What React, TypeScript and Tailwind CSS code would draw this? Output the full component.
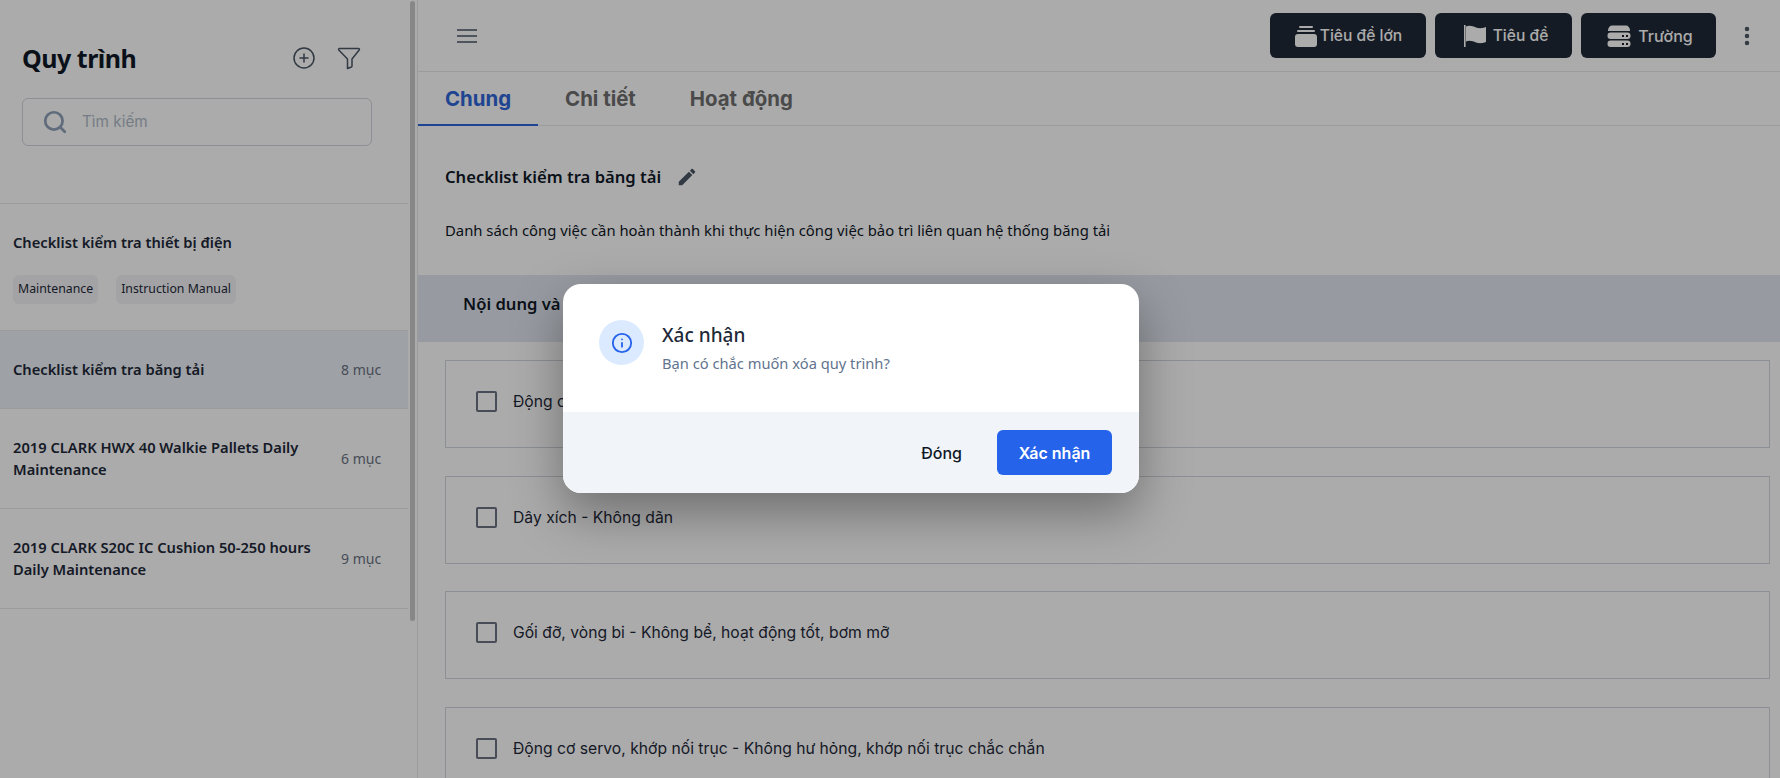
import { Info, PlusCircle, Search, MoreVertical } from 'lucide-react';

const sans = 'font-["Noto_Sans",sans-serif]';
const inter = 'font-["Inter",sans-serif]';

const checklist = [
  'Động cơ - Không rung, không ồn',
  'Dây xích - Không dãn',
  'Gối đỡ, vòng bi - Không bể, hoạt động tốt, bơm mỡ',
  'Động cơ servo, khớp nối trục - Không hư hỏng, khớp nối trục chắc chắn',
];

const rows = [
  { name: 'Checklist kiểm tra băng tải', count: '8 mục', active: true, h: 'h-[78px]' },
  { name: '2019 CLARK HWX 40 Walkie Pallets Daily Maintenance', count: '6 mục', active: false, h: 'h-[100px]' },
  { name: '2019 CLARK S20C IC Cushion 50-250 hours Daily Maintenance', count: '9 mục', active: false, h: 'h-[100px]' },
];

function StackIcon() {
  return (
    <svg width="24" height="24" viewBox="0 0 24 24" fill="currentColor">
      <rect x="1" y="10" width="22" height="13" rx="3" />
      <rect x="3" y="6" width="18" height="2" rx="1" />
      <rect x="5" y="2" width="14" height="2" rx="1" />
    </svg>
  );
}

function ServerIcon() {
  return (
    <svg width="24" height="24" viewBox="0 0 24 24" fill="currentColor">
      <path d="M5 1.5h14c2 0 4 2 4 5v.5H1v-.5c0-3 2-5 4-5z" />
      <rect x="0.5" y="8.5" width="23" height="6.5" rx="3" />
      <rect x="0.5" y="16.5" width="23" height="6.5" rx="3" />
      <rect x="15" y="11" width="2" height="2" fill="#151c28" />
      <rect x="19" y="11" width="2" height="2" fill="#151c28" />
      <rect x="15" y="19" width="2" height="2" fill="#151c28" />
      <rect x="19" y="19" width="2" height="2" fill="#151c28" />
    </svg>
  );
}

function FlagIcon() {
  return (
    <svg width="24" height="24" viewBox="0 0 24 24" fill="currentColor">
      <path d="M1 1h1.6v22H1z" />
      <path d="M3 2.5c4-1.5 7 0 10 1s6 1 10-.5v15c-4 1.5-7 1.5-10 .5s-6-2.5-10-1z" />
    </svg>
  );
}

function FunnelIcon() {
  return (
    <svg width="24" height="24" viewBox="0 0 24 24" fill="none" stroke="currentColor" strokeWidth="1.5" strokeLinejoin="round">
      <path d="M2.5 2.5h19c.8 0 1.2.9.7 1.5L15 13v7c0 .5-.3.8-.7 1l-3.8 1.5V13L1.8 4c-.5-.6-.1-1.5.7-1.5z" />
    </svg>
  );
}

function HamburgerIcon() {
  return (
    <svg width="20" height="14" viewBox="0 0 20 14" fill="none" stroke="currentColor" strokeWidth="1.6">
      <path d="M0 1h20M0 7h20M0 13h20" />
    </svg>
  );
}

function EditIcon() {
  return (
    <svg width="22" height="22" viewBox="0 0 24 24" fill="currentColor">
      <path d="M3 17.25V21h3.75L17.81 9.94l-3.75-3.75L3 17.25zM20.71 7.04c.39-.39.39-1.02 0-1.41l-2.34-2.34c-.39-.39-1.02-.39-1.41 0l-1.83 1.83 3.75 3.75 1.83-1.83z" />
    </svg>
  );
}

function Sidebar() {
  return (
    <aside className="w-[418px] h-full shrink-0 border-r border-gray-200 flex overflow-hidden">
      <div className="w-[408px] shrink-0">
        <div className="h-[204px] pl-[22px] pr-[36px] pt-[38px] border-b border-gray-200">
          <div className="flex items-center h-[40px]">
            <h1 className={`${sans} text-[25px] font-bold text-gray-900 tracking-[-0.5px] pt-[2px]`}>Quy trình</h1>
            <PlusCircle size={24} strokeWidth={1.5} className="ml-auto mr-[21px] text-gray-600" />
            <span className="mr-[11px] text-gray-600"><FunnelIcon /></span>
          </div>
          <div className="mt-[20px] h-[48px] w-[350px] border border-gray-300 rounded-md flex items-center pl-[19px]">
            <Search size={26} strokeWidth={2.5} className="text-slate-400" />
            <span className={`${inter} ml-[14px] text-[15.3px] text-[#b0bac7]`}>Tìm kiếm</span>
          </div>
        </div>
        <div className="h-[127px] pl-[13px] pt-[26px] border-b border-gray-200">
          <div className={`${sans} text-[14.7px] font-semibold text-gray-800 leading-[24px]`}>Checklist kiểm tra thiết bị điện</div>
          <div className="mt-[21px] flex gap-[18px]">
            <span className={`${sans} h-[29px] px-[5px] flex items-center rounded-md bg-gray-100 text-[12.3px] text-gray-800`}>Maintenance</span>
            <span className={`${sans} h-[29px] px-[5px] flex items-center rounded-md bg-gray-100 text-[12.3px] text-gray-800`}>Instruction Manual</span>
          </div>
        </div>
        {rows.map((r) => (
          <div key={r.name} className={`${r.h} ${r.active ? 'bg-[#ecf0f6]' : ''} pl-[13px] flex items-center border-b border-gray-200`}>
            <div className={`${sans} w-[320px] pb-[2px] text-[14.7px] font-semibold text-gray-800 leading-[22px]`}>{r.name}</div>
            <span className={`${sans} ml-[8px] text-sm text-gray-500`}>{r.count}</span>
          </div>
        ))}
      </div>
      <div className="w-[5px] ml-[2px] mt-px h-[620px] rounded-full bg-[#c9c9c9]" />
    </aside>
  );
}

function Main() {
  return (
    <main className="flex-1 min-w-0 h-full overflow-hidden">
      <header className="h-[72px] border-b border-gray-200 flex items-center pl-[39px]">
        <span className="text-gray-600"><HamburgerIcon /></span>
        <div className={`${inter} ml-auto flex items-center gap-[9px] text-[15.6px] font-medium text-white`}>
          <button className="w-[156px] h-[45px] rounded-md bg-[#1f2937] flex items-center justify-center gap-[2px]"><StackIcon />Tiêu đề lớn</button>
          <button className="w-[137px] h-[45px] rounded-md bg-[#1f2937] flex items-center justify-center gap-[6px] pl-[4px]"><FlagIcon />Tiêu đề</button>
          <button className="w-[135px] h-[45px] rounded-md bg-[#1f2937] flex items-center justify-center gap-[7px] pl-[3px] text-base"><ServerIcon />Trường</button>
        </div>
        <MoreVertical size={24} strokeWidth={2.5} className="ml-[19px] mr-[21px] text-gray-600" />
      </header>

      <nav className={`${inter} h-[54px] border-b border-gray-200 flex text-[20.4px] font-bold`}>
        <span className="px-[27px] h-[54px] pt-[3px] flex items-center border-b-2 border-[#2f66d8] text-[#2f66d8]">Chung</span>
        <span className="px-[27px] h-[53px] pt-[1px] flex items-center text-[#6f6f6f]">Chi tiết</span>
        <span className="px-[27px] h-[53px] pt-[1px] flex items-center text-[#6f6f6f]">Hoạt động</span>
      </nav>

      <div className="ml-[27px] mt-[39px] flex items-center gap-[15px] h-[24px]">
        <span className={`${sans} text-[16.6px] font-semibold text-gray-900`}>Checklist kiểm tra băng tải</span>
        <span className="text-gray-600"><EditIcon /></span>
      </div>
      <p className={`${sans} ml-[27px] mt-[29px] text-[14.85px] text-gray-900 leading-[24px]`}>
        Danh sách công việc cần hoàn thành khi thực hiện công việc bảo trì liên quan hệ thống băng tải
      </p>

      <div className="mt-[33px] h-[67px] bg-slate-200 flex items-center pl-[45px] pb-[8px]">
        <span className={`${sans} text-[16.6px] font-semibold text-gray-900`}>Nội dung và yêu cầu</span>
      </div>

      <div className="pl-[27px] pr-[10px] pt-[18px] flex flex-col gap-[27.6px]">
        {checklist.map((c) => (
          <div key={c} className="h-[88px] border border-gray-300 flex items-start pl-[30px] pt-[30px]">
            <span className="w-[21px] h-[21px] rounded-[2px] border-2 border-gray-500 shrink-0" />
            <span className={`${inter} ml-[16px] text-[15.7px] text-gray-800 leading-[21px]`}>{c}</span>
          </div>
        ))}
      </div>
    </main>
  );
}

export default function App() {
  return (
    <div className="relative w-[1780px] h-[778px] flex bg-white overflow-hidden">
      <Sidebar />
      <Main />
      <div className="absolute inset-0 bg-black/33">
        <div className="absolute left-[563px] top-[284px] w-[576px] h-[209px] rounded-[18px] overflow-hidden bg-white shadow-[0_20px_50px_rgba(0,0,0,0.35)]">
          <div className="h-[128px] flex pl-[36px] pt-[36px]">
            <div className="w-[45px] h-[45px] rounded-full bg-[#dbeafe] flex items-center justify-center">
              <Info size={22} className="text-[#2563eb]" />
            </div>
            <div className={`${sans} ml-[18px] pt-[2px]`}>
              <div className="text-[19px] font-medium text-gray-800 leading-[26px]">Xác nhận</div>
              <div className="text-[14.7px] text-slate-500 leading-[24px] mt-[3px]">Bạn có chắc muốn xóa quy trình?</div>
            </div>
          </div>
          <div className={`${inter} h-[81px] bg-slate-100 flex items-center justify-end pr-[27px] text-base`}>
            <button className="font-medium text-gray-900 mr-[35px]">Đóng</button>
            <button className="w-[115px] h-[45px] rounded-md bg-[#2563eb] font-semibold text-white">Xác nhận</button>
          </div>
        </div>
      </div>
    </div>
  );
}
